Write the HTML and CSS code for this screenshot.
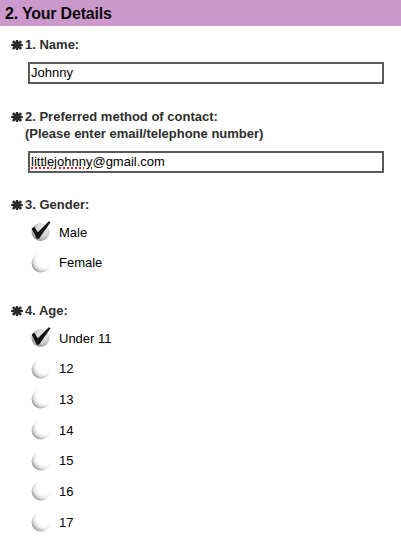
FILE: index.html
```html
<!DOCTYPE html>
<html>
<head>
<meta charset="utf-8">
<link rel="stylesheet" href="styles.css">
</head>
<body>
<svg width="0" height="0" class="defs">
  <defs>
    <radialGradient id="rOff" cx="0.68" cy="0.32" r="0.78">
      <stop offset="0" stop-color="#ffffff"/>
      <stop offset="0.5" stop-color="#ffffff"/>
      <stop offset="0.72" stop-color="#e4e4e4"/>
      <stop offset="0.88" stop-color="#b4b4b4"/>
      <stop offset="1" stop-color="#7c7c7c"/>
    </radialGradient>
    <radialGradient id="rOn" cx="0.64" cy="0.34" r="0.78">
      <stop offset="0" stop-color="#f2f2f2"/>
      <stop offset="0.45" stop-color="#d6d6d6"/>
      <stop offset="0.8" stop-color="#a8a8a8"/>
      <stop offset="1" stop-color="#5e5e5e"/>
    </radialGradient>
    <symbol id="star" viewBox="0 0 12 10">
      <g stroke="#2a2a2a" stroke-width="2.6" stroke-linecap="round">
        <line x1="6" y1="1" x2="6" y2="9"/>
        <line x1="1.2" y1="5" x2="10.8" y2="5"/>
        <line x1="2.6" y1="1.8" x2="9.4" y2="8.2"/>
        <line x1="9.4" y1="1.8" x2="2.6" y2="8.2"/>
      </g>
    </symbol>
    <symbol id="off" viewBox="0 0 22 22">
      <circle cx="11" cy="11" r="9.5" fill="url(#rOff)"/>
    </symbol>
    <symbol id="on" viewBox="0 0 22 22" overflow="visible">
      <circle cx="10.5" cy="11" r="9" fill="url(#rOn)"/>
      <path d="M1.6,7.6 L4.3,5.8 L7.8,11.2 L18.8,0.2 L20.5,1.3 L9,17.8 L6.8,17.8 Z" fill="#111"/>
    </symbol>
  </defs>
</svg>

<div class="section-head">2. Your Details</div>

<div class="form">
  <div class="question">
    <div class="q-label">
      <svg class="star"><use href="#star"/></svg>
      <span>1. Name:</span>
    </div>
    <div class="field">Johnny</div>
  </div>

  <div class="question">
    <div class="q-label">
      <svg class="star"><use href="#star"/></svg>
      <span>2. Preferred method of contact:<br>(Please enter email/telephone number)</span>
    </div>
    <div class="field"><span class="misspelled">littlejohnny</span>@gmail.com</div>
  </div>

  <div class="question">
    <div class="q-label">
      <svg class="star"><use href="#star"/></svg>
      <span>3. Gender:</span>
    </div>
    <div class="options">
      <div class="opt"><svg class="radio"><use href="#on"/></svg><span>Male</span></div>
      <div class="opt"><svg class="radio"><use href="#off"/></svg><span>Female</span></div>
    </div>
  </div>

  <div class="question">
    <div class="q-label">
      <svg class="star"><use href="#star"/></svg>
      <span>4. Age:</span>
    </div>
    <div class="options">
      <div class="opt"><svg class="radio"><use href="#on"/></svg><span>Under 11</span></div>
      <div class="opt"><svg class="radio"><use href="#off"/></svg><span>12</span></div>
      <div class="opt"><svg class="radio"><use href="#off"/></svg><span>13</span></div>
      <div class="opt"><svg class="radio"><use href="#off"/></svg><span>14</span></div>
      <div class="opt"><svg class="radio"><use href="#off"/></svg><span>15</span></div>
      <div class="opt"><svg class="radio"><use href="#off"/></svg><span>16</span></div>
      <div class="opt"><svg class="radio"><use href="#off"/></svg><span>17</span></div>
    </div>
  </div>
</div>
</body>
</html>
```

FILE: styles.css
```css
html, body {
  margin: 0;
  padding: 0;
  background: #ffffff;
}

body {
  font-family: "Liberation Sans", Arial, Helvetica, sans-serif;
  color: #000;
  overflow: hidden;
}

.defs {
  position: absolute;
  width: 0;
  height: 0;
}

.section-head {
  background: #cc99cc;
  height: 26px;
  line-height: 27px;
  padding-left: 5px;
  font-size: 16px;
  font-weight: bold;
  color: #0a0a0a;
  letter-spacing: -0.2px;
}

.form {
  padding-top: 10px;
}

.question + .question {
  margin-top: 23.5px;
}

.q-label {
  display: flex;
  align-items: flex-start;
  padding-left: 11px;
  font-size: 13px;
  line-height: 17px;
  font-weight: bold;
  color: #2e2e2e;
}

.star {
  width: 12px;
  height: 10px;
  margin-top: 4px;
  margin-right: 2px;
  flex: none;
}

.field {
  box-sizing: border-box;
  margin: 9px 0 0 28px;
  width: 356px;
  height: 22px;
  border: 2px solid #5a5a5a;
  padding: 0 1px;
  font-size: 13px;
  line-height: 18px;
  color: #000;
  white-space: nowrap;
}

.misspelled {
  text-decoration: underline dotted #e02020;
  text-decoration-thickness: 2px;
  text-underline-offset: 2px;
}

.options {
  margin-top: 4px;
}

.opt {
  display: flex;
  align-items: center;
  height: 30.67px;
  padding-left: 30px;
  font-size: 13px;
  color: #000;
}

.radio {
  width: 22px;
  height: 22px;
  margin-right: 7px;
  flex: none;
  overflow: visible;
}
```
